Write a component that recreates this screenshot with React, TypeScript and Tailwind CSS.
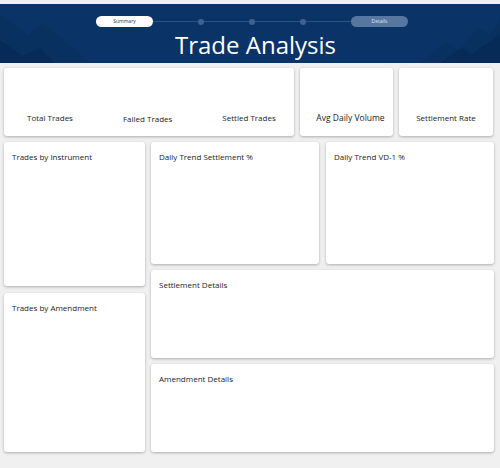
import React from "react";

const font = { fontFamily: '"Open Sans", "Noto Sans", sans-serif' };

const Card = ({ title, className }: { title?: string; className: string }) => (
  <div className={`bg-white rounded-[3px] shadow-[0_1px_3px_rgba(0,0,0,0.28)] ${className}`}>
    {title && <p className="px-2 pt-[9px] text-[8px] text-[#252423]">{title}</p>}
  </div>
);

const Header = () => (
  <div className="relative h-[59px] bg-[#0a3467] overflow-hidden">
    {/* backdrop peaks */}
    <svg className="absolute inset-0" width="500" height="59" viewBox="0 0 500 59">
      <polygon points="0,10 28,31 43,19 70,41 90,59 0,59" fill="#09315f" />
      <polygon points="0,36 22,52 40,44 55,59 0,59" fill="#072b57" />
      <polygon points="420,59 447,38 458,46 478,24 490,31 500,16 500,59" fill="#09315f" />
      <polygon points="440,59 462,44 472,50 500,30 500,59" fill="#072b57" />
    </svg>
    <div className="relative flex flex-col items-center">
      {/* stepper */}
      <div className="mt-[12px] ml-[4px] flex items-center">
        <div className="w-[57px] h-[11px] rounded-full bg-white flex items-center justify-center text-[5px] text-[#333]">
          Summary
        </div>
        <div className="relative w-[198px] h-px bg-[#2c5283]">
          <span className="absolute left-[45px] -top-[2.5px] w-[6px] h-[6px] rounded-full bg-[#3f6192]" />
          <span className="absolute left-[96px] -top-[2.5px] w-[6px] h-[6px] rounded-full bg-[#3f6192]" />
          <span className="absolute left-[147px] -top-[2.5px] w-[6px] h-[6px] rounded-full bg-[#3f6192]" />
        </div>
        <div className="w-[57px] h-[11px] rounded-full bg-[#5877a0] flex items-center justify-center text-[5px] text-[#dce4ee]">
          Details
        </div>
      </div>
      <h1 className="mt-[2px] ml-[11px] text-[24px] leading-[31px] text-white">Trade Analysis</h1>
    </div>
  </div>
);

const Kpi = ({ label, className }: { label: string; className: string }) => (
  <p className={`text-[8px] text-[#252423] ${className}`}>{label}</p>
);

export default function App() {
  return (
    <div className="w-[500px] h-[468px] bg-[#f0f0f0] pt-[4px]" style={font}>
      <Header />
      <div className="px-[4px] pt-[5px]">
        {/* KPI row */}
        <div className="flex gap-[6px] h-[68px]">
          <div className="w-[290px] bg-white rounded-[3px] shadow-[0_1px_3px_rgba(0,0,0,0.28)] flex items-end pb-[12px]">
            <Kpi label="Total Trades" className="ml-[23px]" />
            <Kpi label="Failed Trades" className="ml-[50px] -mb-px" />
            <Kpi label="Settled Trades" className="ml-[50px]" />
          </div>
          <div className="w-[93px] bg-white rounded-[3px] shadow-[0_1px_3px_rgba(0,0,0,0.28)] flex items-end justify-center pl-[8px] pb-[11px]">
            <p className="text-[8.5px] text-[#252423]">Avg Daily Volume</p>
          </div>
          <div className="w-[94px] bg-white rounded-[3px] shadow-[0_1px_3px_rgba(0,0,0,0.28)] flex items-end justify-center pb-[12px]">
            <p className="text-[8px] text-[#252423]">Settlement Rate</p>
          </div>
        </div>

        <div className="mt-[6px] flex gap-[6px]">
          <div className="w-[141px] flex flex-col gap-[7px]">
            <Card title="Trades by Instrument" className="h-[144px]" />
            <Card title="Trades by Amendment" className="h-[159px]" />
          </div>
          <div className="w-[343px] flex flex-col gap-[6px]">
            <div className="flex gap-[7px]">
              <Card title="Daily Trend Settlement %" className="w-[168px] h-[122px]" />
              <Card title="Daily Trend VD-1 %" className="w-[168px] h-[122px]" />
            </div>
            <Card title="Settlement Details" className="h-[88px]" />
            <Card title="Amendment Details" className="h-[88px]" />
          </div>
        </div>
      </div>
    </div>
  );
}
